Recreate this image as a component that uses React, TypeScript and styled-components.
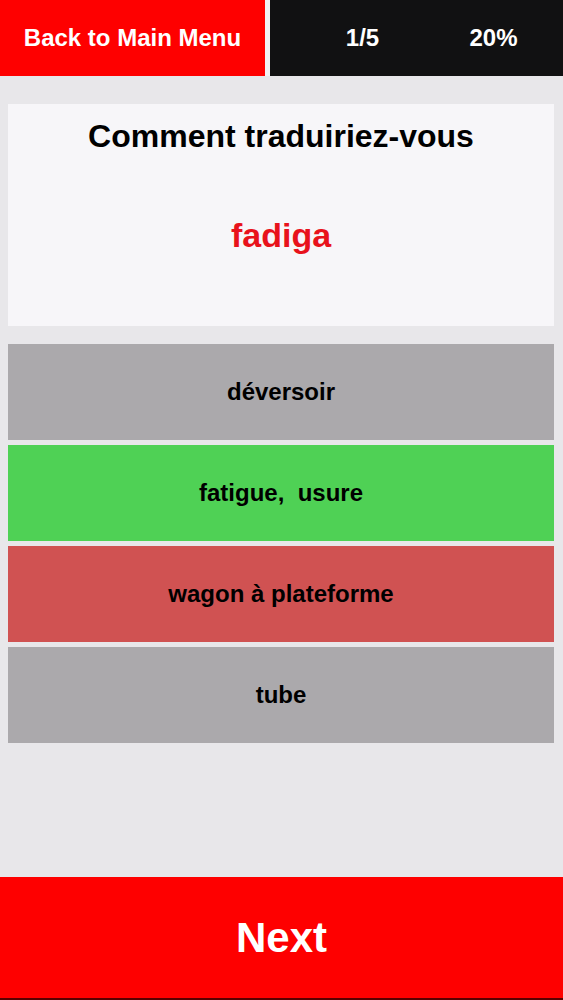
import React from "react";
import styled, { createGlobalStyle } from "styled-components";

const GlobalStyle = createGlobalStyle`
  html, body {
    margin: 0;
    padding: 0;
    background: #e8e7ea;
    font-family: "Liberation Sans", Arial, sans-serif;
  }
`;

type Status = "neutral" | "correct" | "wrong";

const optionColors: Record<Status, string> = {
  neutral: "#aba9ac",
  correct: "#4fd155",
  wrong: "#d05252",
};

const Screen = styled.div`
  display: flex;
  flex-direction: column;
  height: 1000px;
  background: #e8e7ea;
`;

const TopBar = styled.div`
  display: flex;
  height: 76px;
  gap: 5px;
  background: #f2f1f4;
`;

const BackButton = styled.button`
  width: 265px;
  border: none;
  background: #fe0000;
  color: #fff;
  font-family: inherit;
  font-weight: bold;
  font-size: 24px;
  padding: 0;
  cursor: pointer;
`;

const Stats = styled.div`
  flex: 1;
  display: flex;
  align-items: center;
  padding: 0 4px 0 27px;
  background: #111112;
  color: #fff;
  font-weight: bold;
  font-size: 24px;
`;

const Stat = styled.span`
  flex: 1;
  text-align: center;
`;

const Content = styled.div`
  flex: 1;
  display: flex;
  flex-direction: column;
  padding: 28px 9px 0 8px;
`;

const QuestionCard = styled.div`
  height: 222px;
  background: #f7f6f9;
  display: flex;
  flex-direction: column;
  align-items: center;
  padding-top: 14px;
  box-sizing: border-box;
`;

const Prompt = styled.div`
  font-size: 32px;
  font-weight: bold;
  color: #000;
`;

const Word = styled.div`
  margin-top: 61px;
  font-size: 34px;
  font-weight: bold;
  color: #e8121c;
`;

const Options = styled.div`
  display: flex;
  flex-direction: column;
  gap: 5px;
  margin-top: 18px;
`;

const Option = styled.button<{ $status: Status }>`
  height: 96px;
  border: none;
  padding: 0;
  background: ${(p) => optionColors[p.$status]};
  color: #000;
  font-family: inherit;
  font-weight: bold;
  font-size: 24px;
  white-space: pre;
  cursor: pointer;
`;

const NextButton = styled.button`
  height: 123px;
  border: none;
  border-bottom: 2px solid #5a0000;
  background: #fe0000;
  color: #fff;
  font-family: inherit;
  font-weight: bold;
  font-size: 42px;
  padding: 0;
  cursor: pointer;
`;

const options: { text: string; status: Status }[] = [
  { text: "déversoir", status: "neutral" },
  { text: "fatigue,  usure", status: "correct" },
  { text: "wagon à plateforme", status: "wrong" },
  { text: "tube", status: "neutral" },
];

export default function App() {
  return (
    <Screen>
      <GlobalStyle />
      <TopBar>
        <BackButton>Back to Main Menu</BackButton>
        <Stats>
          <Stat>1/5</Stat>
          <Stat>20%</Stat>
        </Stats>
      </TopBar>
      <Content>
        <QuestionCard>
          <Prompt>Comment traduiriez-vous</Prompt>
          <Word>fadiga</Word>
        </QuestionCard>
        <Options>
          {options.map((o) => (
            <Option key={o.text} $status={o.status}>
              {o.text}
            </Option>
          ))}
        </Options>
      </Content>
      <NextButton>Next</NextButton>
    </Screen>
  );
}
